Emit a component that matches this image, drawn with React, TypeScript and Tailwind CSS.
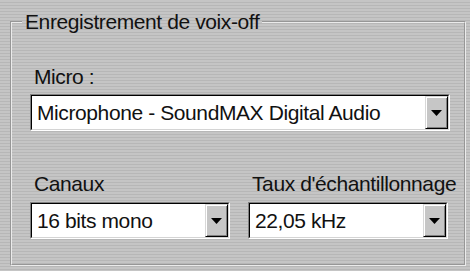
import React from "react";

function Arrow() {
  return (
    <svg width="11" height="6" viewBox="0 0 11 6">
      <polygon points="0,0 11,0 5.5,6" fill="#000" />
    </svg>
  );
}

function Combo({ value, className }: { value: string; className?: string }) {
  return (
    <div
      className={
        "flex h-[37px] border border-t-[#808080] border-l-[#808080] border-b-white border-r-white " +
        (className ?? "")
      }
    >
      <div className="flex flex-1 items-stretch bg-white border border-t-black border-l-black border-b-[#d4d4d4] border-r-[#d4d4d4]">
        <div className="flex flex-1 items-center pl-[5px] text-[21px] tracking-[-0.4px] leading-[23px] text-[#111] whitespace-nowrap overflow-hidden">
          {value}
        </div>
        <div className="flex w-[23px] items-center justify-center bg-[#c6c6c6] border border-t-[#d8d8d8] border-l-[#d8d8d8] border-b-black border-r-black shadow-[inset_1px_1px_0_#ffffff,inset_-1px_-1px_0_#808080]">
          <Arrow />
        </div>
      </div>
    </div>
  );
}

export default function App() {
  return (
    <div
      className="w-[470px] h-[271px] overflow-hidden pt-[10px] pl-[10px] pr-[4px] bg-[repeating-linear-gradient(to_bottom,#c5c5c5_0px,#c5c5c5_2px,#b7b7b7_2px,#b7b7b7_3px)]"
      style={{ fontFamily: '"Liberation Sans", Arial, sans-serif' }}
    >
      <fieldset className="m-0 border-2 [border-style:groove] border-[#ebebeb] pt-[32px] pb-[25px] pl-[18px] pr-[14px] min-w-0">
        <legend className="-ml-[8px] px-[3px] text-[21px] tracking-[-0.4px] leading-[23px] text-[#111]">
          Enregistrement de voix-off
        </legend>
        <div className="pl-[4px] text-[21px] tracking-[-0.4px] leading-[23px] text-[#111]">Micro :</div>
        <Combo value="Microphone - SoundMAX Digital Audio" className="mt-[6px]" />
        <div className="mt-[41px] grid grid-cols-[200px_200px] gap-x-[18px]">
          <div className="pl-[4px] text-[21px] tracking-[-0.4px] leading-[23px] text-[#111] whitespace-nowrap">Canaux</div>
          <div className="pl-[4px] text-[21px] tracking-[-0.4px] leading-[23px] text-[#111] whitespace-nowrap">
            Taux d'échantillonnage
          </div>
          <Combo value="16 bits mono" className="mt-[7px]" />
          <Combo value="22,05 kHz" className="mt-[7px]" />
        </div>
      </fieldset>
    </div>
  );
}
